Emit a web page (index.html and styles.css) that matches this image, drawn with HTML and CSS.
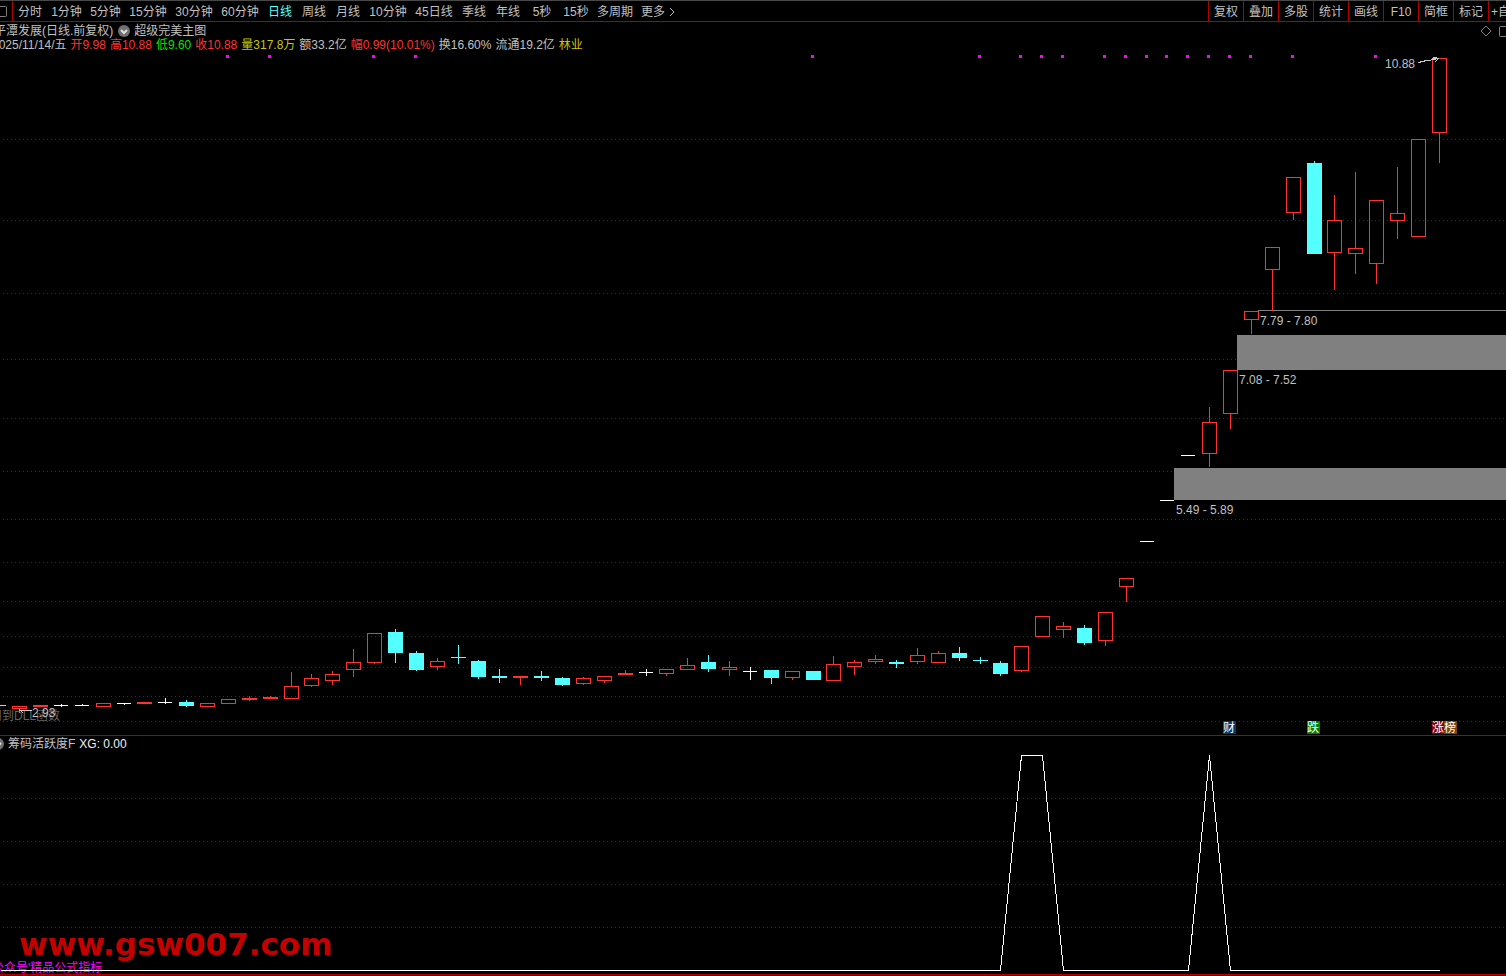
FILE: index.html
```html
<!DOCTYPE html>
<html lang="zh-CN">
<head>
<meta charset="utf-8">
<title>平潭发展 日线</title>
<link rel="stylesheet" href="styles.css">
</head>
<body>
<header class="toolbar">
  <button class="window-btn" aria-label="窗口"><svg width="8" height="12" viewBox="0 0 8 12"><rect class="icon-line" x="-3.5" y="1.5" width="10" height="10" rx="1"/></svg></button>
  <nav class="periods">
    <button>分时</button><button class="mid">1分钟</button><button class="mid">5分钟</button><button class="wide">15分钟</button><button class="wide">30分钟</button><button class="wide">60分钟</button><button class="active">日线</button><button>周线</button><button>月线</button><button class="wide">10分钟</button><button class="wide">45日线</button><button>季线</button><button>年线</button><button>5秒</button><button>15秒</button><button>多周期</button><button class="more">更多<svg width="6" height="10" viewBox="0 0 6 10"><path class="chevron" d="M1 1l4 4l-4 4"/></svg></button>
  </nav>
  <div class="tools">
    <button>复权</button><button>叠加</button><button>多股</button><button>统计</button><button>画线</button><button>F10</button><button>简框</button><button>标记</button><button class="clipped">+自选</button>
  </div>
</header>

<main>
<section class="panel price-panel">
  <svg class="plot" width="100%" height="713" role="img" aria-label="日线K线图">
    <g transform="translate(0 -22)">
      <g class="grid" transform="translate(0 .5)">
        <line x1="3" x2="100%" y1="139" y2="139"/><line x1="3" x2="100%" y1="220" y2="220"/>
        <line x1="3" x2="100%" y1="293" y2="293"/><line x1="3" x2="100%" y1="359" y2="359"/>
        <line x1="3" x2="100%" y1="418" y2="418"/><line x1="3" x2="100%" y1="471" y2="471"/>
        <line x1="3" x2="100%" y1="519" y2="519"/><line x1="3" x2="100%" y1="562" y2="562"/>
        <line x1="3" x2="100%" y1="601" y2="601"/><line x1="3" x2="100%" y1="636" y2="636"/>
        <line x1="3" x2="100%" y1="667" y2="667"/><line x1="3" x2="100%" y1="696" y2="696"/>
        <line x1="3" x2="100%" y1="721" y2="721"/>
      </g>
      <g class="gap">
        <rect x="1258" y="310" width="100%" height="1"/>
        <rect x="1237" y="335" width="100%" height="35"/>
        <rect x="1174" y="468" width="100%" height="32"/>
      </g>
      <path class="signals" d="M226 55h3v3h-3zM268 55h3v3h-3zM372 55h3v3h-3zM414 55h3v3h-3zM811 55h3v3h-3zM978 55h3v3h-3zM1019 55h3v3h-3zM1040 55h3v3h-3zM1061 55h3v3h-3zM1103 55h3v3h-3zM1124 55h3v3h-3zM1145 55h3v3h-3zM1165 55h3v3h-3zM1186 55h3v3h-3zM1207 55h3v3h-3zM1228 55h3v3h-3zM1249 55h3v3h-3zM1291 55h3v3h-3zM1374 55h3v3h-3z"/>
      <g transform="translate(.5 .5)">
        <path class="candle up" d="
          M12 706h14v2h-14z
          M33 705h14v1h-14z
          M96 703h14v3h-14z
          M137 702h14v1h-14z
          M200 703h14v3h-14z
          M221 699h14v4h-14z
          M242 698h14v1h-14zM249 696V700
          M263 697h14v1h-14zM270 696V697
          M284 686h14v12h-14zM291 672V686
          M304 678h14v7h-14zM311 674V678M311 685V686
          M325 674h14v6h-14zM332 671V674M332 680V684
          M346 662h14v7h-14zM353 649V662M353 669V676
          M367 633h14v29h-14zM374 662V663
          M430 661h14v5h-14zM437 658V661M437 666V669
          M513 676h14v1h-14zM520 677V684
          M576 678h14v5h-14zM583 677V678M583 683V684
          M597 676h14v4h-14zM604 680V682
          M618 673h14v1h-14zM625 670V673
          M659 669h14v4h-14zM666 673V675
          M680 665h14v4h-14zM687 658V665
          M722 667h14v2h-14zM729 661V667M729 669V675
          M785 671h14v6h-14zM792 677V679
          M826 664h14v16h-14zM833 656V664
          M847 662h14v4h-14zM854 660V662M854 666V674
          M868 659h14v2h-14zM875 655V659M875 661V663
          M910 655h14v6h-14zM917 648V655M917 661V663
          M931 653h14v9h-14zM938 651V653
          M1014 646h14v24h-14zM1021 670V671
          M1035 616h14v20h-14z
          M1056 626h14v3h-14zM1063 622V626M1063 629V637
          M1098 612h14v28h-14zM1105 640V645
          M1119 578h14v8h-14zM1126 586V601
          M1202 422h14v31h-14zM1209 407V422M1209 453V466
          M1223 370h14v43h-14zM1230 413V428
          M1244 311h14v8h-14zM1251 319V333
          M1265 247h14v22h-14zM1272 269V310
          M1286 177h14v35h-14zM1293 212V219
          M1327 220h14v32h-14zM1334 195V220M1334 252V289
          M1348 248h14v5h-14zM1355 172V248M1355 253V273
          M1369 200h14v63h-14zM1376 263V283
          M1390 213h14v7h-14zM1397 167V213M1397 220V238
          M1411 139h14v97h-14z
          M1432 58h14v74h-14zM1439 132V162"/>
        <path class="candle down" d="
          M-9 705H5
          M179 702h14v3h-14zM186 700V706
          M388 632h14v20h-14zM395 629V662
          M409 653h14v16h-14zM416 651V670
          M451 657H465M458 645V663
          M471 661h14v15h-14zM478 660V678
          M492 676h14v1h-14zM499 669V682
          M534 676h14v1h-14zM541 671V680
          M555 678h14v6h-14zM562 677V685
          M701 662h14v6h-14zM708 655V671
          M764 670h14v7h-14zM771 677V683
          M806 671h14v8h-14z
          M889 662h14v1h-14zM896 660V667
          M952 653h14v4h-14zM959 647V660
          M973 660H987M980 657V663
          M993 663h14v10h-14zM1000 661V675
          M1077 628h14v14h-14zM1084 625V644
          M1307 163h14v90h-14zM1314 161V163"/>
        <path class="candle flat" d="M54 705H67M61 704V706M75 705H88M82 704V705M117 703H130M124 703V704M158 702H171M165 698V703M639 672H652M646 669V675M743 671H756M750 667V679M1140 541H1153M1160 500H1173M1181 455H1194"/>
        <path class="pointer" d="M1418 62L1426 60L1436 59M1432 57h4M1431 58h7M1434 62l3-3M20 710H31M19 709v3M19 709l4 4"/>
      </g>
      <g class="labels">
        <text x="1385" y="68">10.88</text>
        <text x="1260" y="325">7.79 - 7.80</text>
        <text x="1239" y="384">7.08 - 7.52</text>
        <text x="1176" y="514">5.49 - 5.89</text>
        <text class="dim" x="-10" y="720">用到DLL函数</text>
        <text x="32" y="717">2.93</text>
      </g>
      <g class="badges">
        <rect class="blue" x="1223" y="721" width="13" height="13"/><text x="1223" y="732">财</text>
        <rect class="green" x="1307" y="721" width="13" height="13"/><text x="1307" y="732">跌</text>
        <rect class="red" x="1432" y="721" width="12" height="13"/><text x="1432" y="732">涨</text>
        <rect class="brown" x="1444" y="721" width="13" height="13"/><text x="1444" y="732">榜</text>
      </g>
    </g>
  </svg>
  <div class="overlay">
    <div class="title-row">
      <span class="stock">平潭发展(日线.前复权)</span>
      <svg width="13" height="12" viewBox="0 0 13 12"><circle class="knob" cx="7" cy="6" r="6"/><path class="knob-mark" d="M4 5l3 3l3-3"/></svg>
      <span>超级完美主图</span>
      <svg class="corner" width="26" height="14" viewBox="0 0 26 14"><path class="icon-line" d="M1 7l5-5l5 5l-5 5z"/><rect class="icon-line" x="19.5" y="2.5" width="12" height="10" rx="1"/></svg>
    </div>
    <div class="quote-row">
      <span>2025/11/14/五</span><span class="c-red">开9.98</span><span class="c-red">高10.88</span><span class="c-green">低9.60</span><span class="c-red">收10.88</span><span class="c-yellow">量317.8万</span><span>额33.2亿</span><span class="c-red">幅0.99(10.01%)</span><span>换16.60%</span><span>流通19.2亿</span><span class="c-yellow">林业</span>
    </div>
  </div>
</section>

<section class="panel">
  <svg class="plot" width="100%" height="240" role="img" aria-label="筹码活跃度">
    <g transform="translate(0 -736)">
      <g class="grid" transform="translate(0 .5)">
        <line x1="3" x2="100%" y1="798" y2="798"/><line x1="3" x2="100%" y1="841" y2="841"/>
        <line x1="3" x2="100%" y1="884" y2="884"/><line x1="3" x2="100%" y1="927" y2="927"/>
      </g>
      <text class="watermark" x="19" y="955">www.gsw007.com</text>
      <text class="account" x="-8" y="972">公众号'精品公式指标</text>
      <path class="activity" transform="translate(.5 .5)" d="M0 970H1000L1021 755H1042L1063 970H1188L1209 755L1230 970H1439"/>
      <rect class="axis" x="0" y="974" width="100%" height="1"/>
      <path class="axis" d="M550 975h1v1h-1zM984 975h1v1h-1zM1073 975h1v1h-1zM1161 975h1v1h-1z"/>
    </g>
  </svg>
  <div class="overlay sub-title">
    <svg width="12" height="12" viewBox="0 0 12 12"><circle class="knob" cx="6" cy="6" r="6"/><path class="knob-mark" d="M3 5l3 3l3-3"/></svg>
    <span>筹码活跃度F</span><span class="value">XG: 0.00</span>
  </div>
</section>
</main>
</body>
</html>
```
FILE: styles.css
```css
* { box-sizing: border-box; }

body {
  margin: 0;
  background: #000;
  color: #c0c0c0;
  font: 12px/14px "Liberation Sans", "Noto Sans CJK SC", sans-serif;
  overflow: hidden;
}

svg { display: block; flex: none; }

button {
  margin: 0;
  padding: 0;
  border: 0;
  background: none;
  color: inherit;
  font: inherit;
  white-space: nowrap;
}

/* Toolbar */
.toolbar {
  display: flex;
  height: 22px;
  border-top: 1px solid #484848;
  border-bottom: 1px solid #b00000;
  overflow: hidden;
}
.window-btn { width: 13px; border-right: 1px solid #b00000; }
.periods, .tools { display: flex; }
.periods button { min-width: 34px; padding: 2px 4px 0; }
.periods .mid { min-width: 39px; }
.periods .wide { min-width: 46px; }
.periods .active { color: #54ffff; }
.periods .more { display: flex; align-items: center; gap: 4px; }
.tools { margin-left: auto; }
.tools button { width: 35px; padding-top: 2px; border-left: 1px solid #b00000; }
.tools .clipped { width: 18px; padding-left: 2px; overflow: hidden; text-align: left; }

.icon-line { fill: none; stroke: #808080; }
.chevron { fill: none; stroke: #c0c0c0; }
.knob { fill: #707070; }
.knob-mark { fill: none; stroke: #e0e0e0; stroke-width: 2; }

/* Panels: the plot and its captions share one grid cell */
.panel { display: grid; overflow: hidden; }
.price-panel { border-bottom: 1px solid #b00000; }
.plot, .overlay { grid-area: 1 / 1; min-width: 0; }
.overlay { align-self: start; padding-top: 2px; white-space: nowrap; }
.title-row { display: flex; align-items: center; gap: 4px; height: 14px; }
.stock { margin-left: -6px; }
.corner { margin-left: auto; }
.quote-row { display: flex; gap: 4px; margin-left: -8px; }
.sub-title { display: flex; align-items: center; gap: 4px; margin-left: -8px; padding-top: 1px; }
.value { color: #f0f0f0; }

.c-red { color: #ff3232; }
.c-green { color: #00e600; }
.c-yellow { color: #c8c800; }

/* Chart marks */
.grid line {
  stroke: #a80000;
  stroke-dasharray: 1 3;
  shape-rendering: crispEdges;
}
.gap { fill: #808080; }
.signals { fill: #f0f; }
.candle {
  fill: none;
  stroke-width: 1;
  stroke-linecap: square;
  shape-rendering: crispEdges;
}
.up { stroke: #ff3232; }
.down { stroke: #54ffff; fill: #54ffff; }
.flat { stroke: #fff; }
.pointer { fill: none; stroke: #c8c8c8; shape-rendering: crispEdges; }
.labels { fill: #c0c0c0; }
.dim { fill: #646464; }
.badges text { fill: #fff; }
.blue { fill: #003870; }
.green { fill: #008000; }
.red { fill: #800000; }
.brown { fill: #804000; }

.activity { fill: none; stroke: #fff; shape-rendering: crispEdges; }
.axis { fill: #b00000; }
.watermark { fill: #c40000; font: bold 31px "DejaVu Sans", sans-serif; }
.account { fill: #f0f; }
```
